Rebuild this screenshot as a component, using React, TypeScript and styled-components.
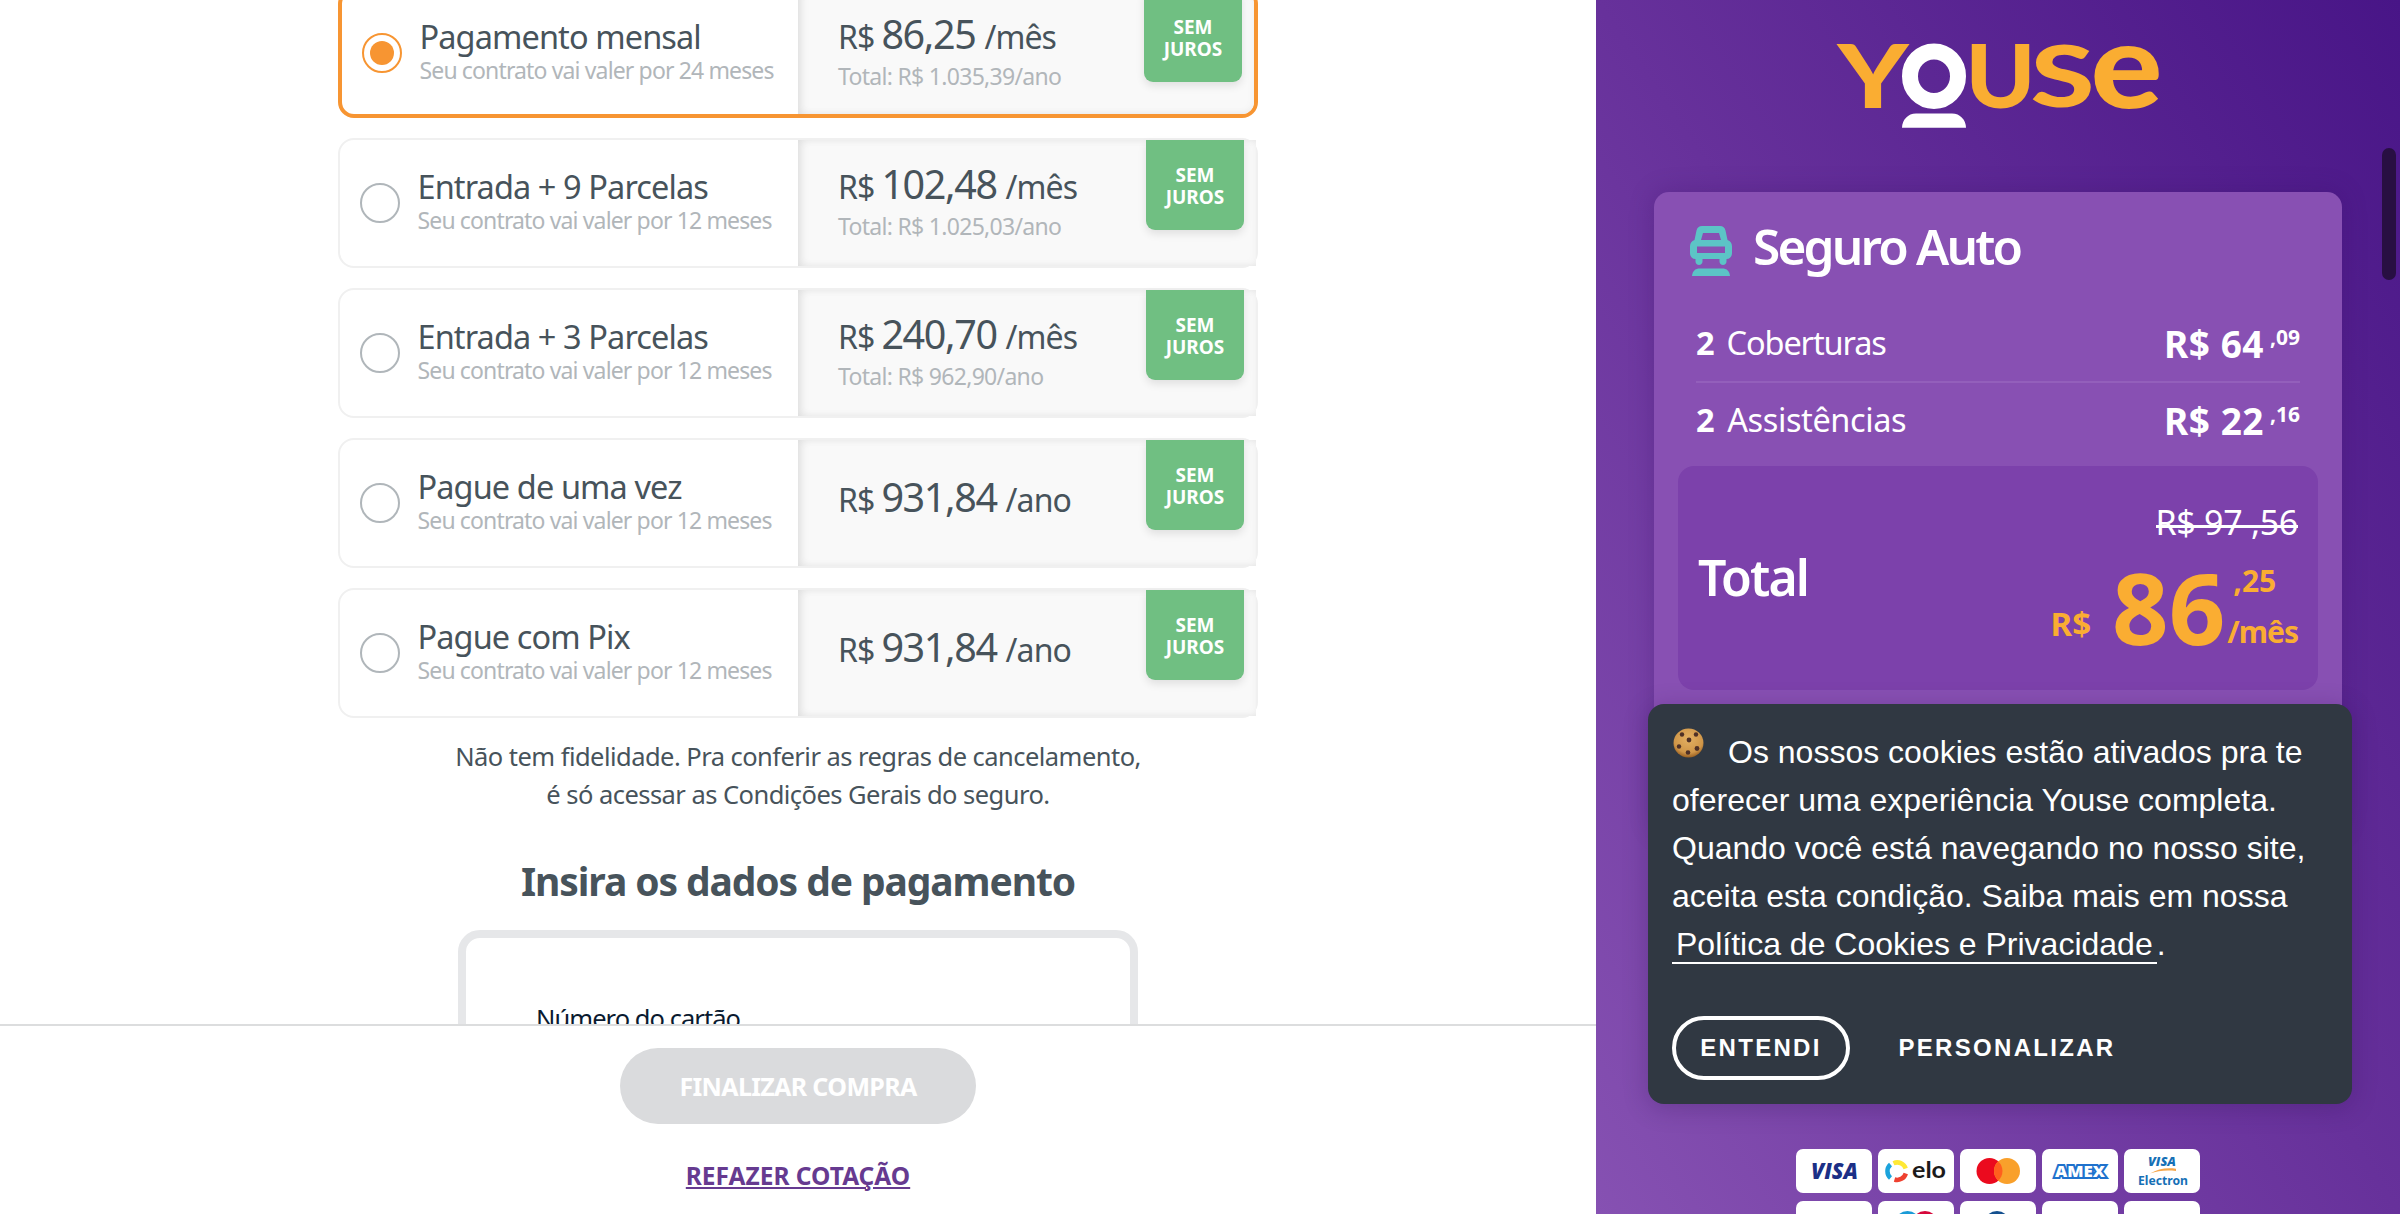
import React from 'react';
import styled, { createGlobalStyle, css } from 'styled-components';

const SANS = `'Noto Sans', 'Open Sans', sans-serif`;
const HELV = `'Liberation Sans', Arial, sans-serif`;

const Global = createGlobalStyle`
  *, *::before, *::after { box-sizing: border-box; }
  html, body { margin: 0; padding: 0; height: 100%; overflow: hidden; }
  body { font-family: ${SANS}; color: #47535b; background: #fff; }
`;

const Page = styled.div`
  display: flex;
  width: 2400px;
  height: 1214px;
  overflow: hidden;
`;

const Main = styled.main`
  width: 1596px;
  display: flex;
  flex-direction: column;
`;

const Content = styled.section`
  height: 1024px;
  overflow: hidden;
  display: flex;
  flex-direction: column;
  align-items: center;
`;

const Plans = styled.div`
  width: 920px;
  margin-top: -12px;
  flex-shrink: 0;
  display: flex;
  flex-direction: column;
  gap: 20px;
`;

const Plan = styled.label<{ $on?: boolean }>`
  height: 130px;
  display: flex;
  border-radius: 16px;
  border: ${p => (p.$on ? '4px solid #f79532' : '2px solid #f0f0f0')};
`;

const PlanInfo = styled.div<{ $on?: boolean }>`
  width: ${p => (p.$on ? 456 : 458)}px;
  padding-left: 20px;
  display: flex;
  align-items: center;
`;

const Radio = styled.span<{ $on?: boolean }>`
  width: 40px;
  height: 40px;
  margin-right: 17.5px;
  flex-shrink: 0;
  border-radius: 50%;
  border: 2px solid ${p => (p.$on ? '#f79532' : '#b0b6ba')};
  display: flex;
  align-items: center;
  justify-content: center;
  &::after {
    content: '';
    width: 24px;
    height: 24px;
    border-radius: 50%;
    background: ${p => (p.$on ? '#f79532' : 'transparent')};
  }
`;

const PlanText = styled.div`
  display: flex;
  flex-direction: column;
  padding-bottom: 4px;
  white-space: nowrap;
`;

const PlanName = styled.span`
  font-size: 32.5px;
  line-height: 38px;
  letter-spacing: -0.9px;
`;

const PlanTerm = styled.span`
  font-size: 23px;
  line-height: 28px;
  letter-spacing: -0.86px;
  color: #b1b6ba;
`;

const PlanPrice = styled.div<{ $on?: boolean }>`
  flex: 1;
  display: flex;
  justify-content: space-between;
  padding: 0 12px 0 40px;
  background: #f9f9f9;
  box-shadow: inset 5px 0 10px -2px rgba(0, 0, 0, 0.09), inset 0 0 10px rgba(0, 0, 0, 0.04);
  border-radius: ${p => (p.$on ? '0 12px 12px 0' : '0')};
`;

const Amounts = styled.div<{ $single?: boolean }>`
  display: flex;
  flex-direction: column;
  justify-content: center;
  gap: 6px;
  padding-bottom: ${p => (p.$single ? 13 : 4)}px;
  white-space: nowrap;
`;

const PriceLine = styled.div`
  display: flex;
  align-items: baseline;
  font-size: 32px;
  line-height: 30px;
  letter-spacing: -0.9px;
`;

const PriceValue = styled.span`
  margin: 0 9px 0 7px;
  font-size: 39.5px;
  line-height: 44px;
  letter-spacing: -1.4px;
`;

const PriceTotal = styled.span`
  font-size: 23px;
  line-height: 28px;
  letter-spacing: -0.7px;
  color: #b1b6ba;
`;

const Badge = styled.span`
  width: 98px;
  height: 90px;
  display: flex;
  flex-direction: column;
  align-items: center;
  padding-top: 24px;
  border-radius: 0 0 9px 9px;
  background: #70bf82;
  box-shadow: 0 4px 8px rgba(0, 0, 0, 0.1);
  color: #fff;
  font-weight: 700;
  font-size: 19px;
  line-height: 22px;
`;

const Rules = styled.p`
  margin: 19px 0 0;
  text-align: center;
  font-size: 25.5px;
  line-height: 38px;
  letter-spacing: -0.54px;
  white-space: nowrap;
`;

const Heading = styled.h2`
  margin: 43px 0 0;
  font-size: 39px;
  line-height: 50px;
  letter-spacing: -1.1px;
  font-weight: 700;
  white-space: nowrap;
`;

const CardForm = styled.div`
  width: 680px;
  height: 400px;
  flex-shrink: 0;
  margin-top: 24px;
  padding: 62px 70px;
  border: 8px solid #e6e7e9;
  border-radius: 22px;
`;

const FieldLabel = styled.label`
  font-size: 25.5px;
  line-height: 36px;
  letter-spacing: -0.95px;
  color: #0a1a30;
`;

const Footer = styled.footer`
  height: 190px;
  border-top: 2px solid #dcddde;
  background: #fff;
  padding-top: 22px;
  display: flex;
  flex-direction: column;
  align-items: center;
`;

const Submit = styled.button`
  width: 356px;
  height: 76px;
  padding: 0;
  border: 0;
  border-radius: 38px;
  background: #dadbdd;
  color: #fff;
  font: 700 25px/38px ${SANS};
  letter-spacing: -0.65px;
  white-space: nowrap;
`;

const Redo = styled.a`
  margin-top: 36px;
  font-size: 24.5px;
  line-height: 32px;
  font-weight: 700;
  color: #663a90;
  text-decoration: underline;
  text-decoration-thickness: 2px;
  text-underline-offset: 2px;
`;

const Side = styled.aside`
  position: relative;
  width: 804px;
  overflow: hidden;
  display: flex;
  flex-direction: column;
  align-items: center;
  background: linear-gradient(to bottom left, #481587, #67319b 50%, #8651b2);
`;

const Logo = styled.svg`
  display: block;
  margin-top: 44px;
  width: 324px;
  height: 85px;
  flex-shrink: 0;
  overflow: visible;
`;

const Quote = styled.section`
  width: 688px;
  height: 640px;
  margin-top: 63px;
  flex-shrink: 0;
  border-radius: 15px;
  padding: 26px 24px 0;
  background: #8850b3;
  box-shadow: 0 0 24px rgba(50, 10, 90, 0.25);
  color: #fff;
`;

const QuoteHead = styled.div`
  display: flex;
  padding-left: 12px;
  height: 95px;
`;

const CarIcon = styled.svg`
  width: 42px;
  height: 50px;
  margin: 8px 21px 0 0;
`;

const QuoteTitle = styled.h3`
  margin: 0;
  font-size: 49.5px;
  line-height: 56px;
  letter-spacing: -2.8px;
  font-weight: 600;
  white-space: nowrap;
`;

const Item = styled.div<{ $line?: boolean }>`
  margin: 0 18px;
  height: ${p => (p.$line ? 70 : 83)}px;
  padding-top: ${p => (p.$line ? 8 : 15)}px;
  border-bottom: ${p => (p.$line ? '2px solid #935fbb' : '0')};
  display: flex;
  justify-content: space-between;
  white-space: nowrap;
`;

const ItemName = styled.span<{ $tight?: boolean }>`
  display: flex;
  font-size: 32.5px;
  line-height: 44px;
  gap: 13px;
  letter-spacing: ${p => (p.$tight ? -1.1 : -0.4)}px;
  b { font-weight: 700; }
`;

const ItemPrice = styled.span`
  display: flex;
  padding-top: 1px;
  font-size: 37px;
  line-height: 44px;
  font-weight: 700;
  span { letter-spacing: 0.5px; }
  sup {
    font-size: 21px;
    line-height: 30px;
    margin-left: 6px;
    vertical-align: top;
  }
`;

const TotalBox = styled.div`
  height: 224px;
  padding: 0 20px;
  border-radius: 16px;
  background: #7c41ab;
  display: flex;
  justify-content: space-between;
  white-space: nowrap;
`;

const TotalLabel = styled.span`
  padding-top: 81px;
  font-size: 50px;
  line-height: 60px;
  letter-spacing: -1.9px;
  font-weight: 600;
`;

const TotalSide = styled.div`
  display: flex;
  flex-direction: column;
  align-items: flex-end;
`;

const OldPrice = styled.span`
  position: relative;
  margin-top: 36px;
  font-size: 34px;
  line-height: 40px;
  letter-spacing: -0.3px;
  &::after {
    content: '';
    position: absolute;
    left: 0;
    right: 0;
    top: 23px;
    height: 3px;
    background: #fff;
  }
`;

const NewPrice = styled.div`
  display: flex;
  height: 110px;
  margin-top: -2px;
  color: #faad32;
  font-weight: 700;
`;

const Currency = styled.span`
  font-size: 33px;
  line-height: 40px;
  padding-top: 64px;
`;

const Whole = styled.span`
  margin-left: 21px;
  font-size: 99px;
  line-height: 110px;
  padding-top: 12px;
`;

const PriceTail = styled.span`
  display: flex;
  flex-direction: column;
  justify-content: space-between;
  font-size: 30px;
  line-height: 40px;
  letter-spacing: -1px;
  padding: 21px 0 0 2px;
  height: 112px;
`;

const Cents = styled.span`
  padding-left: 6px;
  letter-spacing: 0;
`;

const Cookies = styled.div`
  position: absolute;
  left: 52px;
  top: 704px;
  width: 704px;
  height: 400px;
  padding: 24px;
  border-radius: 16px;
  background: #303842;
  box-shadow: 0 4px 24px rgba(40, 10, 70, 0.25);
  color: #fff;
  font-family: ${HELV};
`;

const CookieText = styled.p`
  margin: 0;
  font-size: 32px;
  line-height: 48px;
  white-space: nowrap;
`;

const CookieIcon = styled.svg`
  width: 31px;
  height: 30px;
  margin: 0 24px 0 1px;
  vertical-align: 5px;
`;

const Policy = styled.a`
  padding: 0 4px;
  border-bottom: 2px solid #fff;
`;

const CookieActions = styled.div`
  display: flex;
  align-items: center;
  margin-top: 48px;
`;

const CookieButton = styled.button<{ $outline?: boolean }>`
  height: 64px;
  padding: 0;
  background: none;
  color: #fff;
  border: 0;
  font: 700 24px/30px ${HELV};
  letter-spacing: 2.3px;
  ${p =>
    p.$outline &&
    css`
      width: 178px;
      margin-right: 48.5px;
      border: 4px solid #fff;
      border-radius: 32px;
    `}
`;

const Brands = styled.div`
  position: absolute;
  left: 200px;
  top: 1149px;
  display: grid;
  grid-template-columns: repeat(5, 76px);
  grid-auto-rows: 44px;
  gap: 8px 6px;
`;

const Brand = styled.div`
  background: #fff;
  border-radius: 7px;
  svg { display: block; width: 76px; height: 44px; }
`;

const ScrollThumb = styled.div`
  position: absolute;
  right: 4px;
  top: 148px;
  width: 14px;
  height: 132px;
  border-radius: 7px;
  background: #280f42;
`;

const plans = [
  { name: 'Pagamento mensal', months: 24, value: '86,25', unit: '/mês', total: '1.035,39', on: true },
  { name: 'Entrada + 9 Parcelas', months: 12, value: '102,48', unit: '/mês', total: '1.025,03' },
  { name: 'Entrada + 3 Parcelas', months: 12, value: '240,70', unit: '/mês', total: '962,90' },
  { name: 'Pague de uma vez', months: 12, value: '931,84', unit: '/ano' },
  { name: 'Pague com Pix', months: 12, value: '931,84', unit: '/ano' },
];

const YouseLogo = () => (
  <Logo viewBox="-1 0 324 85" role="img" aria-label="Youse">
    <g fill="#faad32" fontFamily="Lato" fontWeight="900">
      <text x="0.500" y="64" fontSize="87" textLength="71" lengthAdjust="spacingAndGlyphs">Y</text>
      <text x="128.500" y="63.500" fontSize="87" textLength="70" lengthAdjust="spacingAndGlyphs">U</text>
      <text x="193.500" y="63" fontSize="86" textLength="64" lengthAdjust="spacingAndGlyphs">S</text>
      <text x="253.500" y="63.500" fontSize="118" textLength="72" lengthAdjust="spacingAndGlyphs">e</text>
    </g>
    <ellipse cx="97" cy="32.200" rx="24" ry="24.8" fill="none" stroke="#fff" strokeWidth="16" />
    <path d="M65 83.800c0-8 6-14.4 14-14.4h36c8 0 14 6.400 14 14.400z" fill="#fff" />
  </Logo>
);

const Car = () => (
  <CarIcon viewBox="0 0 42 50">
    <g fill="#5cc4c6">
      <path
        fillRule="evenodd"
        d="M12 0h18c3 0 4.800 1.500 5.500 4.500L37.500 14c3 1 4.500 3.500 4.500 6.500V27c0 3.500-2 6-5.500 6v2.500c0 4.500-7 4.500-7 0V33h-17v2.500c0 4.500-7 4.500-7 0V33C2 33 0 30.500 0 27v-6.500C0 17.500 1.500 15 4.500 14L6.500 4.500C7.200 1.500 9 0 12 0zM13 7l-2 7h20l-2-7zM7 20.500V27h28v-6.500z"
      />
      <path d="M2 50c.5-5 3-7.500 8-7.500h22c5 0 7.500 2.500 8 7.500z" />
    </g>
  </CarIcon>
);

const Cookie = () => (
  <CookieIcon viewBox="0 0 31 30">
    <defs>
      <radialGradient id="dough" cx="0.5" cy="0.35" r="0.65">
        <stop offset="0" stopColor="#e3b063" />
        <stop offset="0.75" stopColor="#d09648" />
        <stop offset="1" stopColor="#9a6022" />
      </radialGradient>
    </defs>
    <ellipse cx="15.500" cy="15" rx="15" ry="14.500" fill="url(#dough)" />
    <g fill="#4f3026">
      <circle cx="9" cy="6.500" r="2.200" />
      <circle cx="23" cy="6.500" r="2.200" />
      <circle cx="16" cy="12" r="2.400" />
      <circle cx="6" cy="18.500" r="2.200" />
      <circle cx="24" cy="20.500" r="2.400" />
      <circle cx="15" cy="24.500" r="2.300" />
    </g>
  </CookieIcon>
);

const Visa = () => (
  <svg viewBox="0 0 76 44">
    <text x="15" y="30" fontFamily="Open Sans" fontWeight="800" fontStyle="italic" fontSize="22" fill="#1b2f86" textLength="47" lengthAdjust="spacingAndGlyphs">VISA</text>
  </svg>
);

const Elo = () => (
  <svg viewBox="0 0 76 44">
    <g fill="none" strokeWidth="4.500">
      <path d="M15.500 14.200A9 9 0 0 1 27.700 19.500" stroke="#ffe936" />
      <path d="M27.800 24.500A9 9 0 0 1 16.500 30.500" stroke="#ef4130" />
      <path d="M12.500 29A9 9 0 0 1 12.500 15.500" stroke="#1ba3dc" />
    </g>
    <text x="34" y="29" fontFamily="Lato" fontWeight="700" fontSize="22" fill="#1c1a1a" textLength="34" lengthAdjust="spacingAndGlyphs">elo</text>
  </svg>
);

const Master = () => (
  <svg viewBox="0 0 76 44">
    <circle cx="29.500" cy="22" r="13" fill="#eb0a1e" />
    <circle cx="47" cy="22" r="13" fill="#f9a02b" />
    <path d="M38.250 12.400a13 13 0 0 1 0 19.200a13 13 0 0 1 0-19.200z" fill="#ff5f1e" />
  </svg>
);

const Amex = () => (
  <svg viewBox="0 0 76 44">
    <text x="13" y="28" fontFamily="Open Sans" fontWeight="800" fontSize="16" fill="#fff" stroke="#1f72cd" strokeWidth="4" paintOrder="stroke" textLength="50" lengthAdjust="spacingAndGlyphs">AMEX</text>
  </svg>
);

const Electron = () => (
  <svg viewBox="0 0 76 44">
    <text x="24" y="17" fontFamily="Open Sans" fontWeight="800" fontStyle="italic" fontSize="12.500" fill="#1670b6" textLength="28" lengthAdjust="spacingAndGlyphs">VISA</text>
    <path d="M26 24.500c8-4.500 16-6 26-4.700v2.200c-10-1.200-18-.2-26 2.500z" fill="#f5a64a" />
    <text x="14" y="36" fontFamily="Noto Sans" fontWeight="700" fontSize="12" fill="#1670b6" textLength="50" lengthAdjust="spacingAndGlyphs">Electron</text>
  </svg>
);

const Maestro = () => (
  <svg viewBox="0 0 76 44">
    <circle cx="29.500" cy="23" r="13" fill="#1a9bd7" />
    <circle cx="47" cy="23" r="13" fill="#d6083b" />
  </svg>
);

const Diners = () => (
  <svg viewBox="0 0 76 44">
    <circle cx="37" cy="23" r="13" fill="#14508f" />
    <circle cx="36" cy="24" r="10.500" fill="#fff" />
  </svg>
);

export default function App() {
  return (
    <Page>
      <Global />
      <Main>
        <Content>
          <Plans>
            {plans.map(p => (
              <Plan key={p.name} $on={p.on}>
                <PlanInfo $on={p.on}>
                  <Radio $on={p.on} />
                  <PlanText>
                    <PlanName>{p.name}</PlanName>
                    <PlanTerm>{`Seu contrato vai valer por ${p.months} meses`}</PlanTerm>
                  </PlanText>
                </PlanInfo>
                <PlanPrice $on={p.on}>
                  <Amounts $single={!p.total}>
                    <PriceLine>
                      <span>R$</span>
                      <PriceValue>{p.value}</PriceValue>
                      <span>{p.unit}</span>
                    </PriceLine>
                    {p.total && <PriceTotal>{`Total: R$ ${p.total}/ano`}</PriceTotal>}
                  </Amounts>
                  <Badge>
                    <span>SEM</span>
                    <span>JUROS</span>
                  </Badge>
                </PlanPrice>
              </Plan>
            ))}
          </Plans>
          <Rules>
            Não tem fidelidade. Pra conferir as regras de cancelamento,
            <br />é só acessar as Condições Gerais do seguro.
          </Rules>
          <Heading>Insira os dados de pagamento</Heading>
          <CardForm>
            <FieldLabel>Número do cartão</FieldLabel>
          </CardForm>
        </Content>
        <Footer>
          <Submit>FINALIZAR COMPRA</Submit>
          <Redo>REFAZER COTAÇÃO</Redo>
        </Footer>
      </Main>
      <Side>
        <YouseLogo />
        <Quote>
          <QuoteHead>
            <Car />
            <QuoteTitle>Seguro Auto</QuoteTitle>
          </QuoteHead>
          <Item $line>
            <ItemName $tight>
              <b>2</b>
              <span>Coberturas</span>
            </ItemName>
            <ItemPrice>
              <span>R$ 64</span>
              <sup>,09</sup>
            </ItemPrice>
          </Item>
          <Item>
            <ItemName>
              <b>2</b>
              <span>Assistências</span>
            </ItemName>
            <ItemPrice>
              <span>R$ 22</span>
              <sup>,16</sup>
            </ItemPrice>
          </Item>
          <TotalBox>
            <TotalLabel>Total</TotalLabel>
            <TotalSide>
              <OldPrice>R$ 97 ,56</OldPrice>
              <NewPrice>
                <Currency>R$</Currency>
                <Whole>86</Whole>
                <PriceTail>
                  <Cents>,25</Cents>
                  <span>/mês</span>
                </PriceTail>
              </NewPrice>
            </TotalSide>
          </TotalBox>
        </Quote>
        <Cookies>
          <CookieText>
            <Cookie />
            Os nossos cookies estão ativados pra te
            <br />
            oferecer uma experiência Youse completa.
            <br />
            Quando você está navegando no nosso site,
            <br />
            aceita esta condição. Saiba mais em nossa
            <br />
            <Policy>Política de Cookies e Privacidade</Policy>.
          </CookieText>
          <CookieActions>
            <CookieButton $outline>ENTENDI</CookieButton>
            <CookieButton>PERSONALIZAR</CookieButton>
          </CookieActions>
        </Cookies>
        <Brands>
          <Brand><Visa /></Brand>
          <Brand><Elo /></Brand>
          <Brand><Master /></Brand>
          <Brand><Amex /></Brand>
          <Brand><Electron /></Brand>
          <Brand />
          <Brand><Maestro /></Brand>
          <Brand><Diners /></Brand>
          <Brand />
          <Brand />
        </Brands>
        <ScrollThumb />
      </Side>
    </Page>
  );
}
